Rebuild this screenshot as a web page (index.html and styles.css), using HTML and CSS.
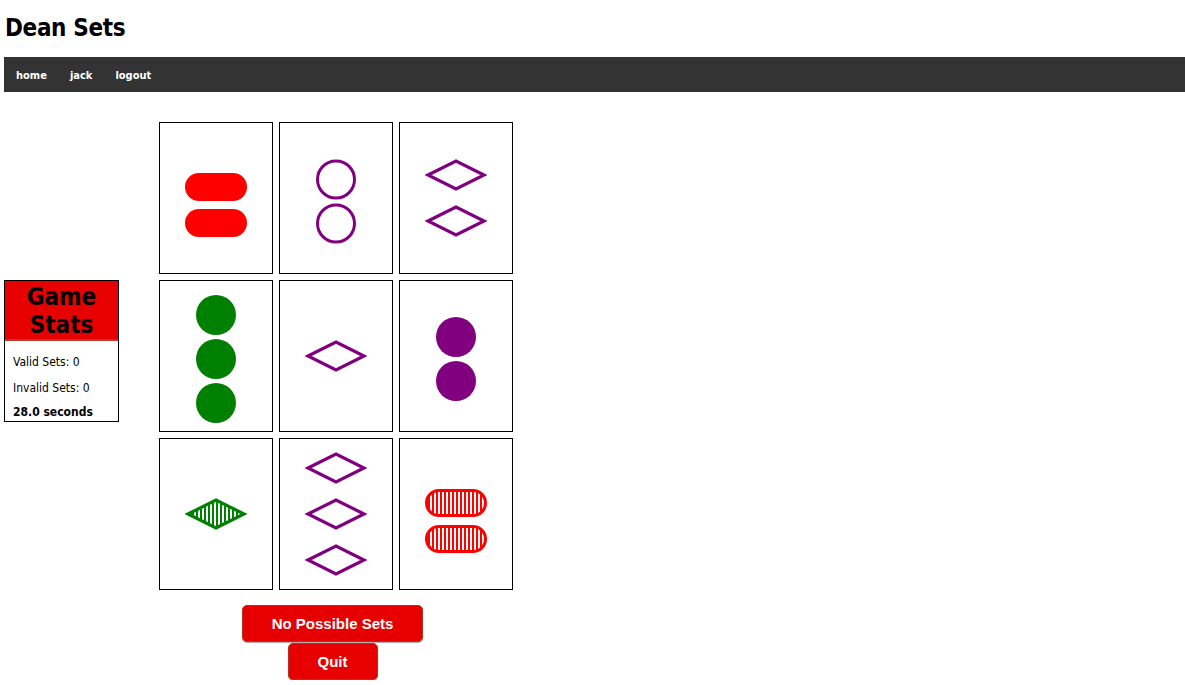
FILE: index.html
```html
<!DOCTYPE html>
<html>
<head>
<meta charset="utf-8">
<title>Dean Sets</title>
<link rel="stylesheet" href="styles.css">
</head>
<body>
<h1 class="title">Dean Sets</h1>
<nav class="nav">
  <a class="nav-link" href="#">home</a>
  <a class="nav-link" href="#">jack</a>
  <a class="nav-link" href="#">logout</a>
</nav>
<main class="main">
  <section class="stats">
    <div class="stats-head">Game Stats</div>
    <div class="stats-body">
      <div class="stat">Valid Sets: 0</div>
      <div class="stat stat-2">Invalid Sets: 0</div>
      <div class="stat stat-time">28.0 seconds</div>
    </div>
  </section>
  <section class="game">
    <div class="board">
      <div class="card"><svg class="card-svg" viewBox="0 0 112 150" width="112" height="150">
        <rect x="25" y="50" width="62" height="28" rx="14" fill="#ff0000"/>
        <rect x="25" y="86" width="62" height="28" rx="14" fill="#ff0000"/>
      </svg></div>
      <div class="card"><svg class="card-svg" viewBox="0 0 112 150" width="112" height="150">
        <circle cx="56" cy="56.5" r="18.5" fill="none" stroke="#800080" stroke-width="3"/>
        <circle cx="56" cy="100.5" r="18.5" fill="none" stroke="#800080" stroke-width="3"/>
      </svg></div>
      <div class="card"><svg class="card-svg" viewBox="0 0 112 150" width="112" height="150">
        <polygon points="28,52 56,38 84,52 56,66" fill="none" stroke="#800080" stroke-width="3.2"/>
        <polygon points="28,98 56,84 84,98 56,112" fill="none" stroke="#800080" stroke-width="3.2"/>
      </svg></div>
      <div class="card"><svg class="card-svg" viewBox="0 0 112 150" width="112" height="150">
        <circle cx="56" cy="34" r="20" fill="#008000"/>
        <circle cx="56" cy="78" r="20" fill="#008000"/>
        <circle cx="56" cy="122" r="20" fill="#008000"/>
      </svg></div>
      <div class="card"><svg class="card-svg" viewBox="0 0 112 150" width="112" height="150">
        <polygon points="28,75 56,61 84,75 56,89" fill="none" stroke="#800080" stroke-width="3.2"/>
      </svg></div>
      <div class="card"><svg class="card-svg" viewBox="0 0 112 150" width="112" height="150">
        <circle cx="56" cy="56" r="20" fill="#800080"/>
        <circle cx="56" cy="100" r="20" fill="#800080"/>
      </svg></div>
      <div class="card"><svg class="card-svg" viewBox="0 0 112 150" width="112" height="150">
        <defs><pattern id="stripe-green" width="4" height="4" patternUnits="userSpaceOnUse"><rect x="0" y="0" width="2" height="4" fill="#008000"/></pattern></defs>
        <polygon points="28,75 56,61 84,75 56,89" fill="url(#stripe-green)" stroke="#008000" stroke-width="3.2"/>
      </svg></div>
      <div class="card"><svg class="card-svg" viewBox="0 0 112 150" width="112" height="150">
        <polygon points="28,29 56,15 84,29 56,43" fill="none" stroke="#800080" stroke-width="3.2"/>
        <polygon points="28,75 56,61 84,75 56,89" fill="none" stroke="#800080" stroke-width="3.2"/>
        <polygon points="28,121 56,107 84,121 56,135" fill="none" stroke="#800080" stroke-width="3.2"/>
      </svg></div>
      <div class="card"><svg class="card-svg" viewBox="0 0 112 150" width="112" height="150">
        <defs><pattern id="stripe-red" width="4" height="4" patternUnits="userSpaceOnUse"><rect x="0" y="0" width="2" height="4" fill="#ff0000"/></pattern></defs>
        <rect x="26.5" y="51.5" width="59" height="25" rx="12.5" fill="url(#stripe-red)" stroke="#ff0000" stroke-width="3"/>
        <rect x="26.5" y="87.5" width="59" height="25" rx="12.5" fill="url(#stripe-red)" stroke="#ff0000" stroke-width="3"/>
      </svg></div>
    </div>
    <div class="actions">
      <button class="btn">No Possible Sets</button>
      <button class="btn">Quit</button>
    </div>
  </section>
</main>
</body>
</html>
```
FILE: styles.css
```css
html, body {
  background: #fff;
}
body {
  margin: 0 0 0 4px;
  font-family: "DejaVu Sans Condensed", "DejaVu Sans", sans-serif;
  color: #000;
}
.title {
  margin: 14px 0 15px 1px;
  font-size: 24px;
  line-height: 28px;
  font-weight: bold;
  letter-spacing: -0.35px;
}
.nav {
  height: 35px;
  background: #333;
  display: flex;
  align-items: center;
  padding-left: 12px;
  gap: 23px;
}
.nav-link {
  color: #fff;
  text-decoration: none;
  font-size: 11px;
  font-weight: bold;
  padding-top: 2px;
}
.main {
  display: flex;
  align-items: flex-start;
  margin-top: 30px;
}
.stats {
  width: 113px;
  border: 1px solid #000;
  margin-top: 158px;
  margin-right: 40px;
}
.stats-head {
  background: #e60000;
  border-bottom: 2px solid #b83a32;
  padding-top: 2px;
  font-size: 24px;
  line-height: 28px;
  font-weight: bold;
  text-align: center;
}
.stats-body {
  padding: 14px 8px 2px;
  font-size: 12px;
}
.stat {
  line-height: 14px;
}
.stat-2 {
  margin-top: 12px;
}
.stat-time {
  margin-top: 10px;
  font-weight: bold;
}
.game {
  display: flex;
  flex-direction: column;
}
.board {
  display: grid;
  grid-template-columns: repeat(3, 114px);
  grid-auto-rows: 152px;
  gap: 6px;
}
.card {
  border: 1px solid #000;
  background: #fff;
}
.card-svg {
  display: block;
}
.actions {
  display: flex;
  flex-direction: column;
  align-items: center;
  gap: 1px;
  margin-top: 15px;
  padding-right: 7px;
}
.btn {
  height: 37px;
  padding: 0 29px;
  background: #e60000;
  color: #fff;
  border: 1px solid #b0302a;
  border-radius: 5px;
  box-shadow: 0 1px 1px rgba(0, 0, 0, 0.35);
  font-family: "Liberation Sans", Arial, sans-serif;
  font-size: 15px;
  font-weight: bold;
}
```
